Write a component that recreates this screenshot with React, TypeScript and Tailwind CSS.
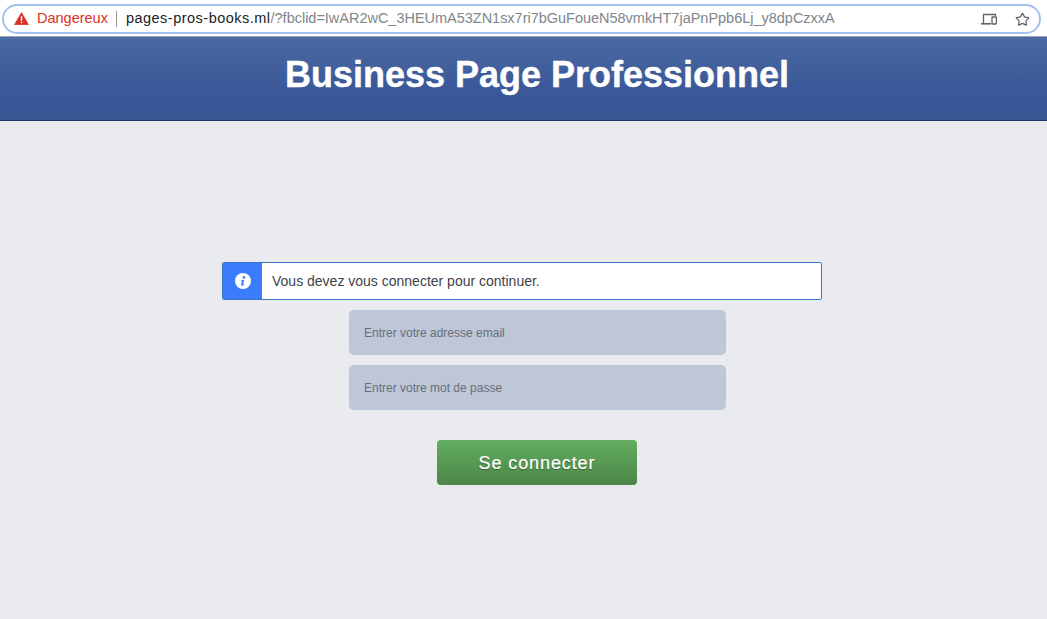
import { Star } from 'lucide-react'

function WarningIcon() {
  return (
    <svg width="15" height="13" viewBox="0 0 16 14" className="shrink-0 mb-[1px]">
      <path d="M8 0.5 L15.6 13.6 L0.4 13.6 Z" fill="#d93025" stroke="#d93025" strokeLinejoin="round" strokeWidth="0.6" />
      <rect x="7.2" y="4.6" width="1.6" height="4.8" fill="#fff" />
      <rect x="7.2" y="10.4" width="1.6" height="1.6" fill="#fff" />
    </svg>
  )
}

function DevicesIcon() {
  return (
    <svg width="16" height="13" viewBox="0 0 16 13" fill="none" stroke="#5f6368" strokeWidth="1.3">
      <path d="M2.5 10 V1.5 H14.5 V3" />
      <path d="M0 10.8 H10" strokeWidth="1.6" />
      <rect x="11" y="4" width="4.4" height="7" rx="0.6" />
    </svg>
  )
}

function InfoIcon() {
  return (
    <svg width="16" height="16" viewBox="0 0 16 16">
      <circle cx="8" cy="8" r="8" fill="#fff" />
      <circle cx="8.9" cy="4.4" r="1.3" fill="#3b7cff" />
      <path d="M6.4 7 L9.2 6.7 L8.2 11 Q8.1 11.7 9.3 11.2 L9.3 12 Q8.2 12.8 7 12.6 Q5.9 12.4 6.2 11.2 L6.9 8.1 L6.3 7.9 Z" fill="#3b7cff" />
    </svg>
  )
}

export default function App() {
  return (
    <div className="w-[1047px] h-[619px] overflow-hidden flex flex-col bg-[#e9ebee] font-['Liberation_Sans',Arial,sans-serif]">
      {/* Browser bar */}
      <div className="h-[37px] shrink-0 bg-white pt-[4px] pl-[2px] pr-[6px] border-b border-[#9aa3b0]">
        <div className="h-[30px] rounded-full border-2 border-[#a3c1ee] bg-white flex items-center pl-[10px] pr-[9px]">
          <WarningIcon />
          <span className="ml-[8px] text-[14.5px] text-[#d93025]">Dangereux</span>
          <span className="ml-[8px] w-px h-[16px] bg-[#9a9a9a]" />
          <span className="ml-[9px] text-[14.47px] text-[#202124] whitespace-nowrap">
            <span className="tracking-[0.5px]">pages-pros-books.ml</span><span className="text-[#80868b]">/?fbclid=IwAR2wC_3HEUmA53ZN1sx7ri7bGuFoueN58vmkHT7jaPnPpb6Lj_y8dpCzxxA</span>
          </span>
          <div className="ml-auto flex items-center gap-[18px]">
            <DevicesIcon />
            <Star size={15} strokeWidth={2} className="text-[#5f6368]" />
          </div>
        </div>
      </div>

      {/* Page header */}
      <div className="h-[84px] shrink-0 bg-gradient-to-b from-[#4a6aa3] via-[#3b5998] via-60% to-[#385795] border-b border-[#1f3566] flex items-center justify-center pl-[27px] pb-[8px]">
        <h1 className="text-[36px] leading-none font-bold text-white [-webkit-text-stroke:0.4px_white]">Business Page Professionnel</h1>
      </div>

      {/* Login form */}
      <div className="pt-[141px] flex flex-col items-center">
        <div className="w-[600px] h-[38px] ml-[-3px] flex rounded-[2px] overflow-hidden border border-[#3f75c9] bg-white">
          <div className="w-[39px] bg-[#3b7cff] flex items-center justify-center">
            <InfoIcon />
          </div>
          <div className="flex items-center pl-[10px] text-[14px] text-[#3f3f4a]">Vous devez vous connecter pour continuer.</div>
        </div>
        <div className="mt-[10px] w-[377px] ml-[28px] flex flex-col gap-[10px]">
          <div className="h-[45px] rounded-[5px] bg-[#bdc7d8] flex items-center pl-[15px] text-[12px] text-[#6a6e78]">Entrer votre adresse email</div>
          <div className="h-[45px] rounded-[5px] bg-[#bdc7d8] flex items-center pl-[15px] text-[12px] text-[#6a6e78]">Entrer votre mot de passe</div>
        </div>
        <button className="mt-[30px] ml-[27px] w-[200px] h-[45px] pt-[2px] rounded-[4px] bg-gradient-to-b from-[#62ad5f] to-[#4c8647] text-white text-[18px] tracking-[0.9px] [-webkit-text-stroke:0.2px_white] [text-shadow:0_1px_1px_rgba(0,0,0,0.35)]">
          Se connecter
        </button>
      </div>
    </div>
  )
}
